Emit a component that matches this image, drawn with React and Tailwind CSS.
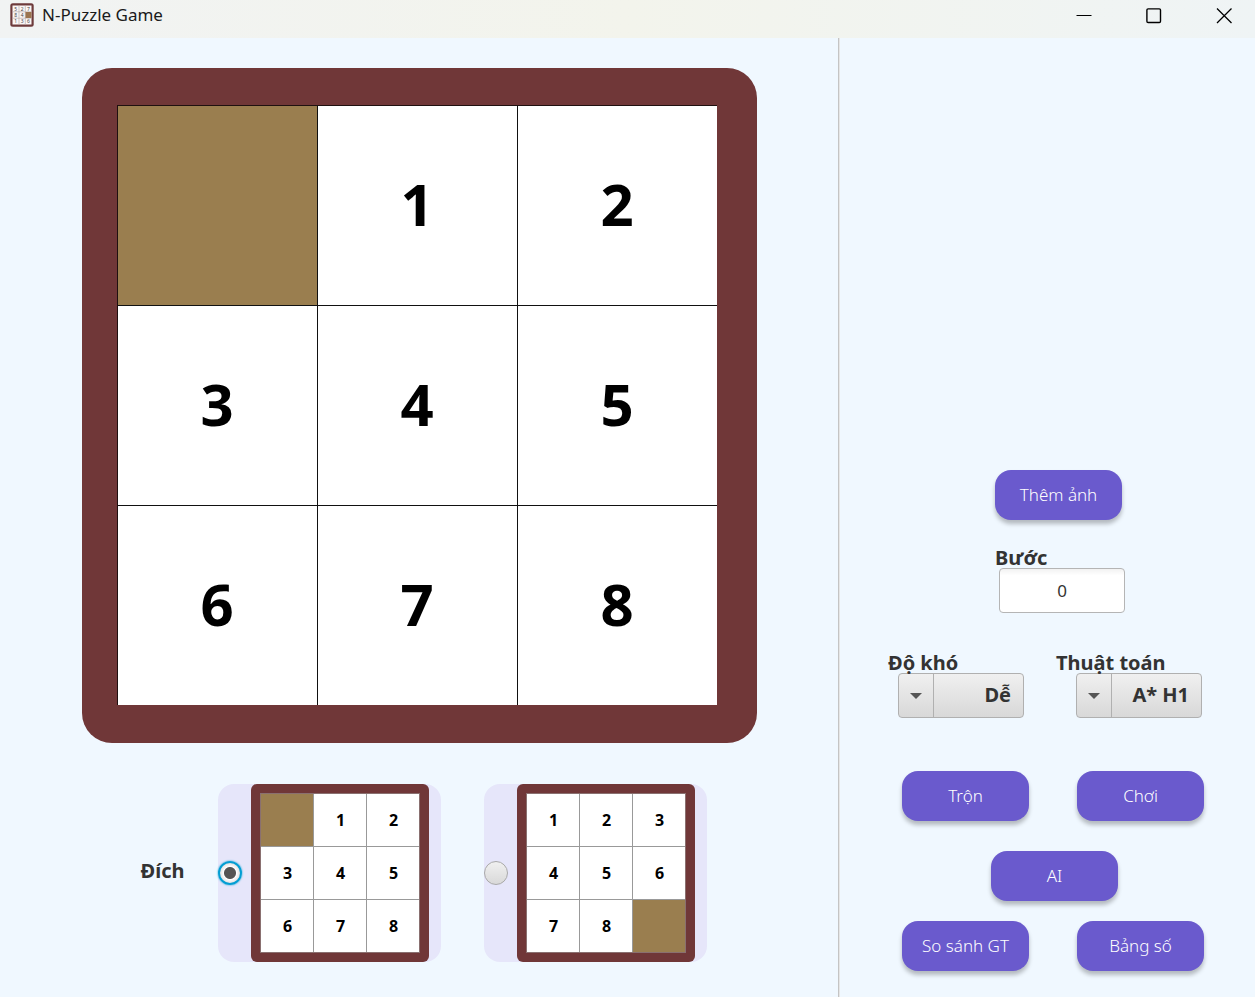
import { useState } from "react";

const BLANK_FIRST = ["", "1", "2", "3", "4", "5", "6", "7", "8"];
const BLANK_LAST = ["1", "2", "3", "4", "5", "6", "7", "8", ""];

function AppIcon() {
  const cells = ["5", "2", "7", "8", "4", "", "1", "3", "6"];
  return (
    <svg viewBox="0 0 24 24" className="size-6" aria-hidden="true">
      <rect x="0.3" y="0.3" width="23.4" height="23.4" rx="2.5" fill="#6e3b3c" />
      <rect x="2.5" y="2.5" width="19" height="19" fill="#fbf7f6" />
      <path d="M9 2.5v19M15.3 2.5v19M2.5 8.8h19M2.5 15.2h19" stroke="#b9aeae" strokeWidth="0.7" />
      <rect x="15.5" y="9" width="6" height="6" fill="#9b7450" />
      {cells.map((n, i) => (
        <text
          key={i}
          x={5.8 + (i % 3) * 6.3}
          y={7.5 + Math.floor(i / 3) * 6.4}
          textAnchor="middle"
          fontSize="5"
          fill="#4a4444"
          fontFamily="Noto Sans, sans-serif"
        >
          {n}
        </text>
      ))}
    </svg>
  );
}

function TitleBar() {
  return (
    <header className="flex h-[38px] shrink-0 items-start justify-between bg-linear-to-r from-[#f1f3f3] via-[#f3f4ec] to-[#eff4f5] pr-[23px] pl-2.5">
      <div className="flex items-center gap-2 pt-[3px]">
        <AppIcon />
        <h1 className="text-[17px] leading-6 text-[#1a1a1a]">N-Puzzle Game</h1>
      </div>
      <div className="flex gap-[54px] pt-2">
        <button type="button" aria-label="Minimize">
          <svg viewBox="0 0 16 16" className="size-4" fill="none" stroke="#000" aria-hidden="true">
            <path d="M0.5 7.5h15" />
          </svg>
        </button>
        <button type="button" aria-label="Maximize">
          <svg viewBox="0 0 16 16" className="size-4" fill="none" stroke="#000" strokeWidth="1.4" aria-hidden="true">
            <rect x="0.9" y="0.9" width="13.6" height="13.6" rx="1.2" />
          </svg>
        </button>
        <button type="button" aria-label="Close">
          <svg viewBox="0 0 16 16" className="size-4" fill="none" stroke="#000" strokeWidth="1.3" aria-hidden="true">
            <path d="M1 0.5l14.5 14.5M15.5 0.5L1 15" />
          </svg>
        </button>
      </div>
    </header>
  );
}

function Board() {
  return (
    <div className="rounded-[30px] bg-[#703738] pt-[37px] pr-10 pb-[38px] pl-[35px]">
      <div className="grid grid-cols-3 gap-px border-t border-l border-[#1f1010] bg-[#111]">
        {BLANK_FIRST.map((n, i) =>
          n ? (
            <button
              key={i}
              type="button"
              className="size-[199px] bg-white pb-1 text-[58px] leading-none font-bold text-black"
            >
              {n}
            </button>
          ) : (
            <div key={i} className="size-[199px] bg-[#9a7e4f]" />
          )
        )}
      </div>
    </div>
  );
}

function MiniBoard({ cells }) {
  return (
    <div className="rounded-md bg-[#703738] p-[9px]">
      <div className="grid grid-cols-3 gap-px border border-[#8a7070] bg-[#999]">
        {cells.map((n, i) => (
          <div
            key={i}
            className={
              n
                ? "flex size-[52px] items-center justify-center bg-white text-base leading-none font-bold text-black"
                : "size-[52px] bg-[#9a7e4f]"
            }
          >
            {n}
          </div>
        ))}
      </div>
    </div>
  );
}

function GoalOption({ cells, value, label, goal, onChange }) {
  return (
    <label className="flex items-center gap-[9px] rounded-2xl bg-[#e6e6fa] pr-3">
      <input
        type="radio"
        name="goal"
        value={value}
        aria-label={label}
        checked={goal === value}
        onChange={() => onChange(value)}
        className="size-6 appearance-none rounded-full border border-[#a9a9a9] bg-linear-to-b from-[#f0f0f0] to-[#d9d9d9] checked:border-2 checked:border-[#039ed3] checked:bg-[radial-gradient(circle,#555_0_5.5px,#fff_6.5px,#e0e0e0_10px)] checked:shadow-[0_0_2px_#039ed3]"
      />
      <MiniBoard cells={cells} />
    </label>
  );
}

function ActionButton({ children }) {
  return (
    <button
      type="button"
      className="h-[50px] w-[127px] shrink-0 rounded-2xl bg-[#6a5acd] text-[17px] leading-6 font-light text-white shadow-[0_4px_4px_rgba(0,0,0,0.25)]"
    >
      {children}
    </button>
  );
}

function ComboBox({ id, options }) {
  return (
    <div className="grid h-[45px] w-[126px] rounded-[4px] border border-[#b0b0b0] bg-linear-to-b from-[#f0f0f0] to-[#d8d8d8]">
      <select
        id={id}
        className="col-start-1 row-start-1 appearance-none bg-transparent pr-3 pb-0.5 pl-9 text-right text-xl leading-6 font-bold text-[#333] [text-align-last:right]"
      >
        {options.map((o) => (
          <option key={o}>{o}</option>
        ))}
      </select>
      <span className="pointer-events-none col-start-1 row-start-1 flex w-[35px] items-center justify-center border-r border-[#b0b0b0]">
        <svg viewBox="0 0 12 6" className="h-1.5 w-3" aria-hidden="true">
          <path d="M0 0h12L6 6z" fill="#555" />
        </svg>
      </span>
    </div>
  );
}

const labelStyle = "z-10 text-xl leading-[21px] font-bold text-[#333]";

export default function App() {
  const [goal, setGoal] = useState("first");
  const [steps, setSteps] = useState("0");
  return (
    <div className="flex min-h-screen flex-col bg-[#f0f8ff] font-['Noto_Sans',sans-serif]">
      <TitleBar />
      <main className="flex flex-1">
        <section className="flex flex-1 flex-col items-center pt-[30px]">
          <Board />
          <div role="radiogroup" aria-labelledby="goal-label" className="mt-[41px] flex items-center gap-[43px] pl-2.5">
            <span id="goal-label" className={`${labelStyle} -mr-[9px] pb-1.5`}>Đích</span>
            <GoalOption cells={BLANK_FIRST} value="first" label="Ô trống ở đầu" goal={goal} onChange={setGoal} />
            <GoalOption cells={BLANK_LAST} value="last" label="Ô trống ở cuối" goal={goal} onChange={setGoal} />
          </div>
        </section>
        <aside className="flex w-[417px] shrink-0 flex-col border-l border-[#c4c4c4] pt-[432px] pb-6 pl-[49px] shadow-[inset_1px_0_0_#e6e6e6]">
          <div className="pl-[107px]">
            <ActionButton>Thêm ảnh</ActionButton>
          </div>
          <div className="mt-[27px] flex flex-col pl-[107px]">
            <label htmlFor="steps" className={labelStyle}>Bước</label>
            <input
              id="steps"
              value={steps}
              onChange={(e) => setSteps(e.target.value)}
              className="ml-1 h-[45px] w-[126px] rounded-[4px] border border-[#b5b5b5] bg-linear-to-b from-[#f2f2f2] to-white to-15% text-center text-[17px] text-[#333]"
            />
          </div>
          <div className="mt-[39px] flex gap-8">
            <div className="flex flex-col">
              <label htmlFor="level" className={labelStyle}>Độ khó</label>
              <div className="pl-2.5">
                <ComboBox id="level" options={["Dễ", "Khó"]} />
              </div>
            </div>
            <div className="flex flex-col">
              <label htmlFor="algorithm" className={labelStyle}>Thuật toán</label>
              <div className="pl-5">
                <ComboBox id="algorithm" options={["A* H1", "A* H2"]} />
              </div>
            </div>
          </div>
          <div className="mt-[53px] flex gap-12 pl-3.5">
            <ActionButton>Trộn</ActionButton>
            <ActionButton>Chơi</ActionButton>
          </div>
          <div className="mt-[30px] pl-[103px]">
            <ActionButton>AI</ActionButton>
          </div>
          <div className="mt-5 flex gap-12 pl-3.5">
            <ActionButton>So sánh GT</ActionButton>
            <ActionButton>Bảng số</ActionButton>
          </div>
        </aside>
      </main>
    </div>
  );
}
